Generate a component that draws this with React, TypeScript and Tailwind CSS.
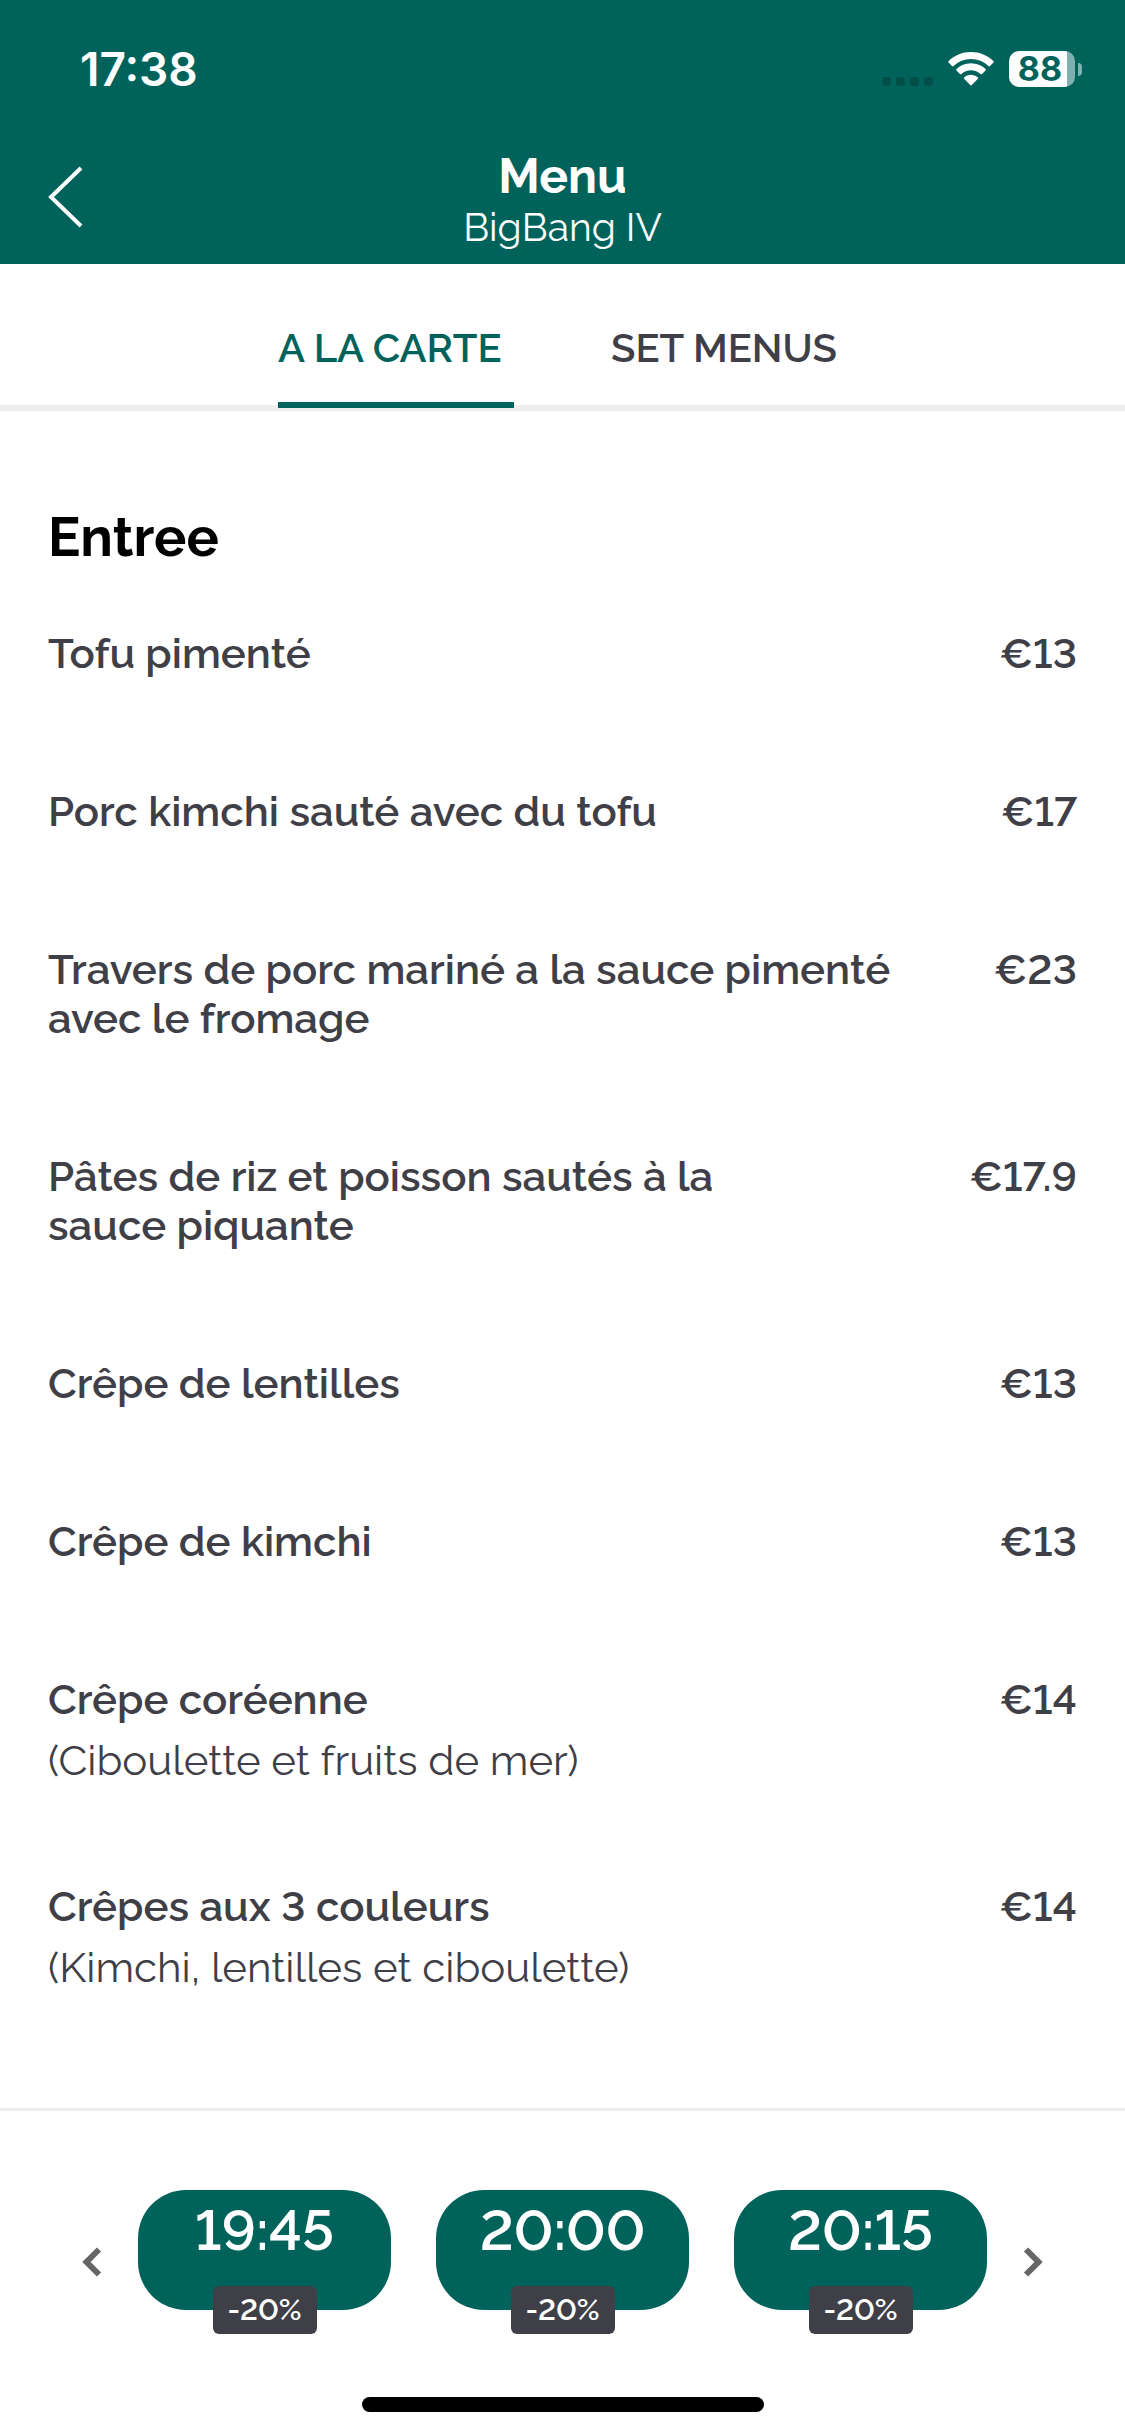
import { useState } from "react";

type Dish = { name: string; price: string; note?: string };

const dishes: Dish[] = [
  { name: "Tofu pimenté", price: "€13" },
  { name: "Porc kimchi sauté avec du tofu", price: "€17" },
  { name: "Travers de porc mariné a la sauce pimenté\navec le fromage", price: "€23" },
  { name: "Pâtes de riz et poisson sautés à la\nsauce piquante", price: "€17.9" },
  { name: "Crêpe de lentilles", price: "€13" },
  { name: "Crêpe de kimchi", price: "€13" },
  { name: "Crêpe coréenne", price: "€14", note: "(Ciboulette et fruits de mer)" },
  { name: "Crêpes aux 3 couleurs", price: "€14", note: "(Kimchi, lentilles et ciboulette)" },
];

const tabs = ["A LA CARTE", "SET MENUS"];
const slots = ["19:45", "20:00", "20:15"];

function StatusBar() {
  return (
    <div className="flex items-center justify-between pt-[42px] pr-[43px] pl-20 font-['Inter',sans-serif]">
      <span className="text-[46px] leading-[54px] font-semibold">17:38</span>
      <div className="flex items-center">
        <svg className="mt-6 mr-[15px]" width="51" height="9" viewBox="0 0 51 9" fill="#004f48" aria-hidden="true">
          <rect width="9" height="9" rx="3" />
          <rect x="14" width="9" height="9" rx="3" />
          <rect x="28" width="9" height="9" rx="3" />
          <rect x="42" width="9" height="9" rx="3" />
        </svg>
        <svg className="mr-[15px]" width="46" height="34" viewBox="0 0 46 34" fill="#fff" aria-label="Wi-Fi">
          <path d="M23 0C14.300 0 6.400 3.400 .6 8.900a1.200 1.200 0 0 0 0 1.700l3.300 3.400a1.200 1.200 0 0 0 1.700 0A25 25 0 0 1 23 7a25 25 0 0 1 17.400 7 1.200 1.200 0 0 0 1.700 0l3.300-3.400a1.200 1.200 0 0 0 0-1.700C39.600 3.400 31.700 0 23 0Z" />
          <path d="M23 11.300c-5.600 0-10.700 2.100-14.500 5.600a1.200 1.200 0 0 0 0 1.700l3.400 3.400a1.200 1.200 0 0 0 1.600 0A14 14 0 0 1 23 18.300c3.600 0 7 1.400 9.500 3.700a1.200 1.200 0 0 0 1.600 0l3.400-3.400a1.200 1.200 0 0 0 0-1.700C33.700 13.400 28.600 11.300 23 11.300Z" />
          <path d="M23 22.700c-2.600 0-4.900.9-6.700 2.500a1.200 1.200 0 0 0 0 1.700l5.900 6a1.200 1.200 0 0 0 1.600 0l5.900-6a1.200 1.200 0 0 0 0-1.700A10 10 0 0 0 23 22.700Z" />
        </svg>
        <div className="flex h-9 w-[66px] items-center justify-center rounded-[10px] bg-linear-to-r from-white from-88% to-[#80b1ae] to-88% pr-1 text-[34px] leading-9 font-bold text-[#00635b]">
          88
        </div>
        <div className="ml-[3px] h-[13px] w-1 rounded-r-full bg-[#80b1ae]" />
      </div>
    </div>
  );
}

function Chevron({ flip = false }: { flip?: boolean }) {
  return (
    <svg width="20" height="30" viewBox="0 0 20 30" fill="none" stroke="#666" strokeWidth="6" aria-hidden="true">
      <path d={flip ? "M3 2.500 15.500 15 3 27.500" : "M17 2.500 4.500 15 17 27.500"} />
    </svg>
  );
}

export default function App() {
  const [active, setActive] = useState(0);

  return (
    <div className="flex min-h-screen flex-col bg-white font-['Raleway','Lato',sans-serif] text-[#3f4047] lining-nums">
      <header className="bg-[#00635b] pb-[14px] text-white">
        <StatusBar />
        <div className="grid grid-cols-[1fr_auto_1fr] items-start px-12 pt-[52px]">
          <button type="button" aria-label="Back" className="justify-self-start pt-[18px]">
            <svg width="36" height="62" viewBox="0 0 36 62" fill="none" stroke="#fff" strokeWidth="4" aria-hidden="true">
              <path d="M33 2 3 31l30 29" />
            </svg>
          </button>
          <div className="text-center">
            <h1 className="text-[48px] leading-[56px] font-bold">Menu</h1>
            <p className="text-[39px] leading-[46px] font-normal">BigBang IV</p>
          </div>
        </div>
      </header>

      <div role="tablist" className="flex justify-center gap-[97px] border-b-[6px] border-[#eee] pt-[59px]">
        {tabs.map((tab, i) => (
          <button
            key={tab}
            type="button"
            role="tab"
            aria-selected={i === active}
            onClick={() => setActive(i)}
            className={
              "-mb-[3px] w-[236px] border-b-[6px] pb-[29px] text-left text-[40px] leading-[50px] font-semibold whitespace-nowrap " +
              (i === active ? "border-[#00635b] text-[#00635b]" : "border-transparent")
            }
          >
            {tab}
          </button>
        ))}
      </div>

      <main className="flex-1 px-12">
        <h2 className="pt-[94px] text-[54px] leading-[64px] font-bold text-black">Entree</h2>
        <ul className="flex flex-col gap-[109px] pt-[60px] pb-[95px] text-[42px] leading-[49px]">
          {dishes.map((dish) => (
            <li key={dish.name} className="flex items-start justify-between">
              <div>
                <h3 className="font-semibold whitespace-pre-line">{dish.name}</h3>
                {dish.note && <p className="-mb-3 pt-3 font-normal">{dish.note}</p>}
              </div>
              <span className="font-semibold">{dish.price}</span>
            </li>
          ))}
        </ul>
      </main>

      <footer className="border-t-[3px] border-[#eee] pt-[79px] pb-6">
        <div className="flex items-center justify-center gap-9">
          <button type="button" aria-label="Earlier times" className="pt-6">
            <Chevron />
          </button>
          <div className="flex gap-[45px]">
            {slots.map((slot) => (
              <button
                key={slot}
                type="button"
                className="relative h-[120px] w-[253px] rounded-[48px] bg-[#00635b] pb-10 text-[57px] leading-[68px] font-semibold text-white"
              >
                {slot}
                <span className="absolute inset-x-0 -bottom-6 mx-auto h-12 w-[104px] rounded-[6px] bg-[#3f4047] text-[30px] leading-[48px]">
                  -20%
                </span>
              </button>
            ))}
          </div>
          <button type="button" aria-label="Later times" className="pt-6">
            <Chevron flip />
          </button>
        </div>
        <div className="mx-auto mt-[87px] h-[15px] w-[402px] rounded-full bg-black" />
      </footer>
    </div>
  );
}
